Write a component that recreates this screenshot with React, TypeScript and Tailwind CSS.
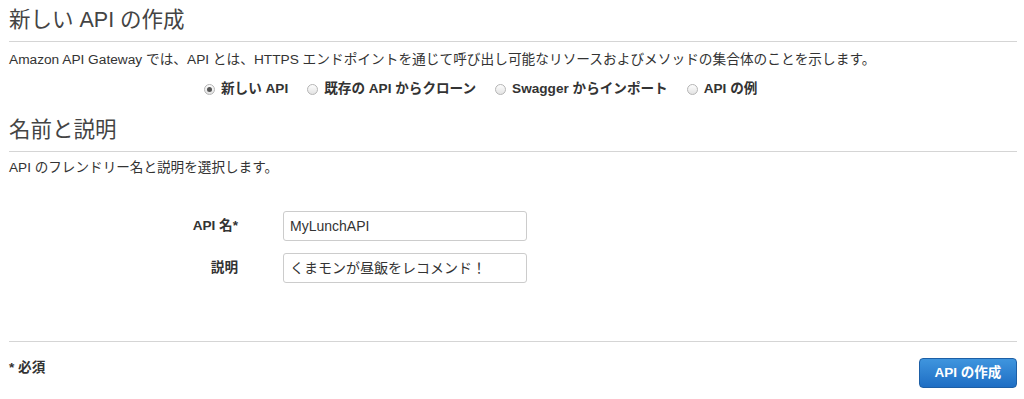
const font = {
  fontFamily: '"Liberation Sans", "Noto Sans CJK JP", sans-serif',
};

const Radio = ({ checked, label }: { checked?: boolean; label: string }) => (
  <label className="flex items-center gap-[6px]">
    <span className="flex h-[11px] w-[11px] items-center justify-center rounded-full border border-[#b5b5b5] bg-gradient-to-b from-[#fdfdfd] to-[#e3e3e3]">
      {checked && <span className="h-[5px] w-[5px] rounded-full bg-[#555]" />}
    </span>
    <span className="font-bold">{label}</span>
  </label>
);

const Field = ({ label, value }: { label: string; value: string }) => (
  <div className="flex items-center">
    <div className="w-[229px] text-right font-bold text-[#333]">{label}</div>
    <div className="ml-[45px] flex h-[30px] w-[244px] items-center rounded-[3px] border border-[#ccc] bg-white px-[6px] text-[14px] text-[#333]">
      {value}
    </div>
  </div>
);

export default function App() {
  return (
    <div
      className="h-[399px] w-[1024px] bg-white pl-[9px] pr-[7px] text-[13.6px] text-[#333]"
      style={font}
    >
      {/* 新しい API の作成 */}
      <h1 className="h-[42px] border-b border-[#d5d5d5] pt-[5px] text-[21.5px] leading-[30px] font-normal text-[#444]">
        新しい API の作成
      </h1>
      <p className="mt-[9px] text-[13.7px] leading-[18px]">
        Amazon API Gateway では、API とは、HTTPS エンドポイントを通じて呼び出し可能なリソースおよびメソッドの集合体のことを示します。
      </p>
      <div className="mt-[11px] flex h-[18px] items-center gap-[19px] pl-[195px]">
        <Radio checked label="新しい API" />
        <Radio label="既存の API からクローン" />
        <Radio label="Swagger からインポート" />
        <Radio label="API の例" />
      </div>

      {/* 名前と説明 */}
      <h2 className="mt-[17px] h-[37px] border-b border-[#d5d5d5] text-[21.5px] leading-[30px] font-normal text-[#444]">
        名前と説明
      </h2>
      <p className="mt-[7px] leading-[18px]">API のフレンドリー名と説明を選択します。</p>

      <div className="mt-[34px] flex flex-col gap-[12px]">
        <Field label="API 名*" value="MyLunchAPI" />
        <Field label="説明" value="くまモンが昼飯をレコメンド！" />
      </div>

      {/* footer */}
      <div className="mt-[58px] flex justify-between border-t border-[#d5d5d5] pt-[16px]">
        <span className="font-bold">* 必須</span>
        <button className="h-[30px] w-[98px] rounded-[4px] border border-[#1d5fa6] bg-gradient-to-b from-[#3f95de] to-[#1e6ec4] text-[13.5px] font-bold text-white">
          API の作成
        </button>
      </div>
    </div>
  );
}
